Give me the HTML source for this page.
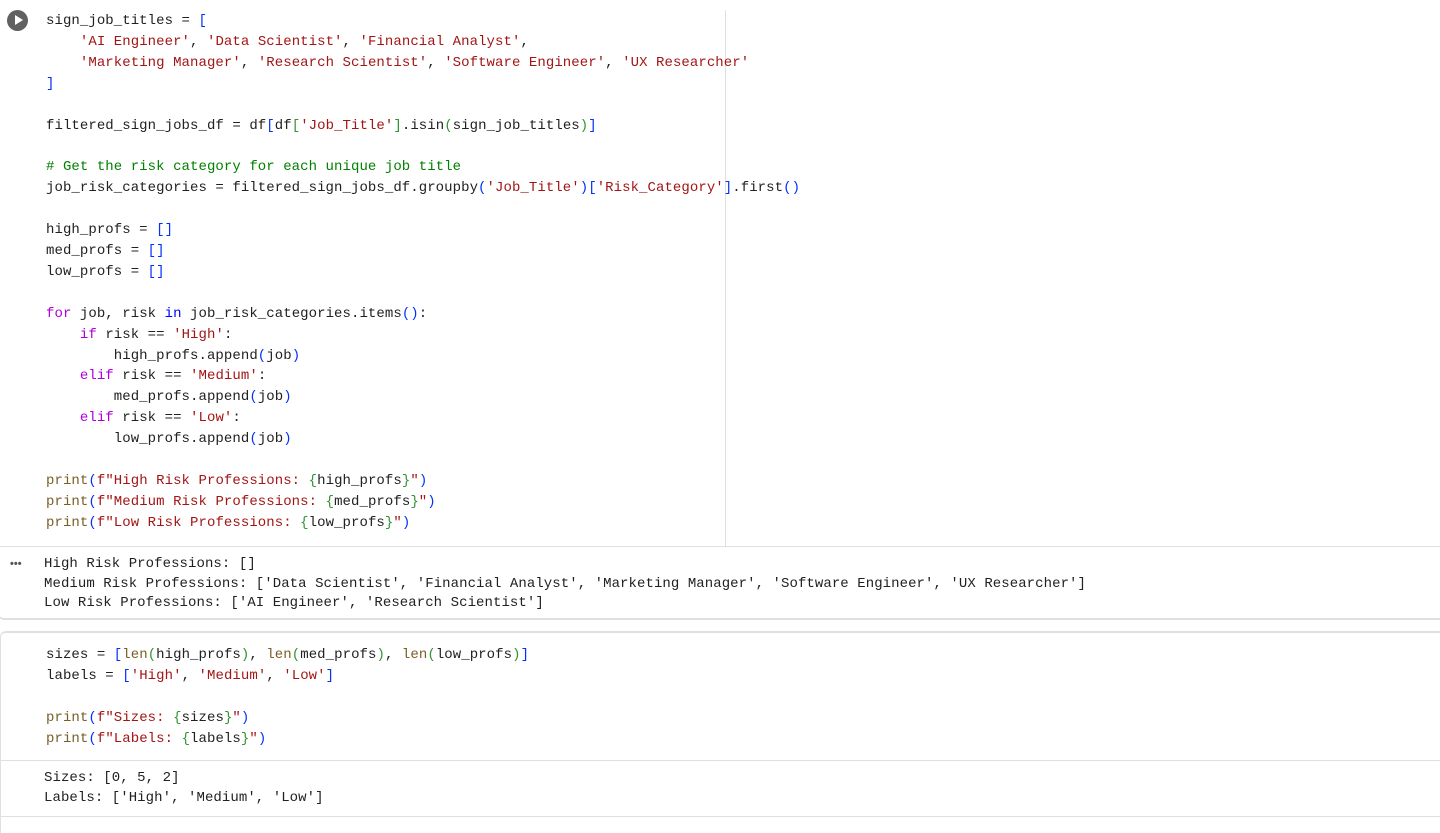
<!DOCTYPE html>
<html><head><meta charset="utf-8"><style>
body{margin:0;width:1440px;height:818px;background:#fff;overflow:hidden;position:relative;font-family:"Liberation Mono",monospace;font-size:14px;color:#212121}
pre{margin:0;font-family:inherit;font-size:14px;letter-spacing:0.07px;position:absolute;white-space:pre}
.code{line-height:20.9px}
.out{line-height:19.5px}
.s{color:#a31515}.b{color:#0431fa}.p{color:#319331}.k{color:#af00db}.i{color:#0000ff}.f{color:#795e26}.c{color:#008000}
.line{position:absolute;background:#e0e0e0}
</style></head><body>
<div style="position:absolute;left:7px;top:10px;width:21px;height:21px;border-radius:50%;background:#616161"></div>
<div style="position:absolute;left:15px;top:15px;width:0;height:0;border-left:8px solid #fff;border-top:5.5px solid transparent;border-bottom:5.5px solid transparent"></div>
<div class="line" style="left:725px;top:10px;width:1px;height:536px"></div>
<pre class="code" style="left:46px;top:11px">sign_job_titles = <span class="b">[</span>
    <span class="s">'AI Engineer'</span>, <span class="s">'Data Scientist'</span>, <span class="s">'Financial Analyst'</span>,
    <span class="s">'Marketing Manager'</span>, <span class="s">'Research Scientist'</span>, <span class="s">'Software Engineer'</span>, <span class="s">'UX Researcher'</span>
<span class="b">]</span>

filtered_sign_jobs_df = df<span class="b">[</span>df<span class="p">[</span><span class="s">'Job_Title'</span><span class="p">]</span>.isin<span class="p">(</span>sign_job_titles<span class="p">)</span><span class="b">]</span>

<span class="c"># Get the risk category for each unique job title</span>
job_risk_categories = filtered_sign_jobs_df.groupby<span class="b">(</span><span class="s">'Job_Title'</span><span class="b">)</span><span class="b">[</span><span class="s">'Risk_Category'</span><span class="b">]</span>.first<span class="b">()</span>

high_profs = <span class="b">[]</span>
med_profs = <span class="b">[]</span>
low_profs = <span class="b">[]</span>

<span class="k">for</span> job, risk <span class="i">in</span> job_risk_categories.items<span class="b">()</span>:
    <span class="k">if</span> risk == <span class="s">'High'</span>:
        high_profs.append<span class="b">(</span>job<span class="b">)</span>
    <span class="k">elif</span> risk == <span class="s">'Medium'</span>:
        med_profs.append<span class="b">(</span>job<span class="b">)</span>
    <span class="k">elif</span> risk == <span class="s">'Low'</span>:
        low_profs.append<span class="b">(</span>job<span class="b">)</span>

<span class="f">print</span><span class="b">(</span><span class="s">f"High Risk Professions: </span><span class="p">{</span>high_profs<span class="p">}</span><span class="s">"</span><span class="b">)</span>
<span class="f">print</span><span class="b">(</span><span class="s">f"Medium Risk Professions: </span><span class="p">{</span>med_profs<span class="p">}</span><span class="s">"</span><span class="b">)</span>
<span class="f">print</span><span class="b">(</span><span class="s">f"Low Risk Professions: </span><span class="p">{</span>low_profs<span class="p">}</span><span class="s">"</span><span class="b">)</span></pre>
<div class="line" style="left:0;top:546px;width:1440px;height:1px"></div>
<div style="position:absolute;left:10px;top:558px;font-size:11px;color:#555;font-family:'Liberation Sans',sans-serif;font-weight:bold;letter-spacing:0px">•••</div>
<pre class="out" style="left:44px;top:555px">High Risk Professions: []
Medium Risk Professions: ['Data Scientist', 'Financial Analyst', 'Marketing Manager', 'Software Engineer', 'UX Researcher']
Low Risk Professions: ['AI Engineer', 'Research Scientist']</pre>
<div style="position:absolute;left:-2px;top:546px;width:1450px;height:72px;border-bottom:2px solid #e0e0e0;border-left:1px solid #e0e0e0;border-radius:0 0 6px 6px"></div>
<div style="position:absolute;left:0;top:631px;width:1445px;height:200px;border-top:2px solid #e0e0e0;border-left:1px solid #e0e0e0;border-radius:6px 0 0 0"></div>
<pre class="code" style="left:46px;top:645px">sizes = <span class="b">[</span><span class="f">len</span><span class="p">(</span>high_profs<span class="p">)</span>, <span class="f">len</span><span class="p">(</span>med_profs<span class="p">)</span>, <span class="f">len</span><span class="p">(</span>low_profs<span class="p">)</span><span class="b">]</span>
labels = <span class="b">[</span><span class="s">'High'</span>, <span class="s">'Medium'</span>, <span class="s">'Low'</span><span class="b">]</span>

<span class="f">print</span><span class="b">(</span><span class="s">f"Sizes: </span><span class="p">{</span>sizes<span class="p">}</span><span class="s">"</span><span class="b">)</span>
<span class="f">print</span><span class="b">(</span><span class="s">f"Labels: </span><span class="p">{</span>labels<span class="p">}</span><span class="s">"</span><span class="b">)</span></pre>
<div class="line" style="left:0;top:760px;width:1440px;height:1px"></div>
<pre class="out" style="left:44px;top:769px">Sizes: [0, 5, 2]
Labels: ['High', 'Medium', 'Low']</pre>
<div class="line" style="left:0;top:816px;width:1440px;height:1px"></div>
</body></html>
